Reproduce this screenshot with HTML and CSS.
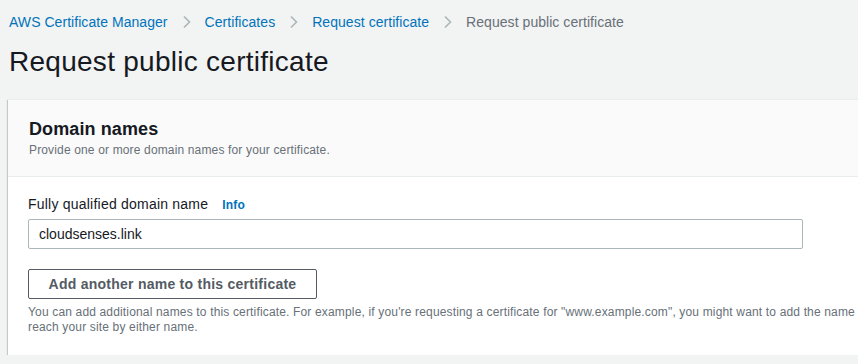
FILE: index.html
```html
<!DOCTYPE html>
<html lang="en">
  <head>
    <meta charset="UTF-8" />
    <meta name="viewport" content="width=device-width, initial-scale=1.0" />
    <title>Request public certificate</title>
    <link rel="stylesheet" href="styles.css">
  </head>
  <body>
    <div class="page">
      <nav class="breadcrumbs">
        <a href="#">AWS Certificate Manager</a>
        <span class="sep"><svg width="10" height="14" viewBox="0 0 10 14"><path d="M2 1.5 L7.5 7 L2 12.5" fill="none" stroke="#aab7b8" stroke-width="1.6"/></svg></span>
        <a href="#">Certificates</a>
        <span class="sep"><svg width="10" height="14" viewBox="0 0 10 14"><path d="M2 1.5 L7.5 7 L2 12.5" fill="none" stroke="#aab7b8" stroke-width="1.6"/></svg></span>
        <a href="#">Request certificate</a>
        <span class="sep"><svg width="10" height="14" viewBox="0 0 10 14"><path d="M2 1.5 L7.5 7 L2 12.5" fill="none" stroke="#aab7b8" stroke-width="1.6"/></svg></span>
        <span class="current">Request public certificate</span>
      </nav>

      <h1>Request public certificate</h1>

      <div class="card">
        <div class="card-header">
          <h2>Domain names</h2>
          <p>Provide one or more domain names for your certificate.</p>
        </div>
        <div class="card-body">
          <div class="field-label">
            <label for="fqdn">Fully qualified domain name</label>
            <a href="#" class="info">Info</a>
          </div>
          <input type="text" id="fqdn" class="text-input" value="cloudsenses.link" />
          <button class="btn">Add another name to this certificate</button>
          <p class="hint">You can add additional names to this certificate. For example, if you're requesting a certificate for "www.example.com", you might want to add the name<br>reach your site by either name.</p>
        </div>
      </div>
    </div>
  </body>
</html>
```

FILE: styles.css
```css
html,
body {
  margin: 0;
  overflow: hidden;
}

body {
  font-family: "Liberation Sans", Arial, sans-serif;
  background-color: #f2f3f3;
  color: #16191f;
}

.page {
  width: 1200px;
  padding: 0 0 0 8px;
}

.breadcrumbs {
  display: flex;
  align-items: center;
  height: 22px;
  padding-top: 11px;
  font-size: 14px;
  padding-left: 1px;
  letter-spacing: 0.05px;
}

.breadcrumbs a {
  color: #0073bb;
  text-decoration: none;
}

.breadcrumbs .sep {
  display: flex;
  margin: 0 13px 0 14px;
}

.breadcrumbs .current {
  color: #687078;
}

h1 {
  margin: 12px 0 0 1px;
  font-size: 28px;
  font-weight: 400;
  line-height: 34px;
  letter-spacing: 0.27px;
}

.card {
  margin-top: 20px;
  background-color: #fff;
  box-shadow: 0 1px 1px 0 rgba(0, 28, 36, 0.3), 1px 1px 1px 0 rgba(0, 28, 36, 0.15), -1px 1px 1px 0 rgba(0, 28, 36, 0.15);
  border-top: 1px solid #eaeded;
}

.card-header {
  background-color: #fafafa;
  border-bottom: 1px solid #eaeded;
  padding: 18px 20px 18px 21px;
}

.card-header h2 {
  margin: 0;
  font-size: 18px;
  line-height: 22px;
  font-weight: 700;
  letter-spacing: 0.1px;
}

.card-header p {
  margin: 2px 0 0;
  font-size: 12px;
  line-height: 16px;
  color: #687078;
  letter-spacing: 0.15px;
}

.card-body {
  padding: 17px 20px 20px 20px;
}

.field-label {
  display: flex;
  align-items: baseline;
  gap: 14px;
  font-size: 14px;
  line-height: 20px;
  margin-bottom: 4px;
  letter-spacing: 0.22px;
}

.info {
  color: #0073bb;
  font-weight: 700;
  font-size: 12px;
  text-decoration: none;
}

.text-input {
  display: block;
  box-sizing: border-box;
  width: 775px;
  height: 30px;
  border: 1px solid #aab7b8;
  border-radius: 2px;
  padding: 0 10px;
  font-family: inherit;
  font-size: 14px;
  color: #16191f;
  background-color: #fff;
}

.btn {
  display: block;
  margin-top: 20px;
  box-sizing: border-box;
  height: 30px;
  width: 289px;
  border: 1px solid #545b64;
  border-radius: 2px;
  background-color: #fff;
  color: #545b64;
  font-family: inherit;
  font-size: 14px;
  font-weight: 700;
  letter-spacing: 0.25px;
  cursor: pointer;
}

.hint {
  margin: 6px 0 0;
  font-size: 12px;
  line-height: 15px;
  color: #687078;
  letter-spacing: 0.16px;
  white-space: nowrap;
}
```
